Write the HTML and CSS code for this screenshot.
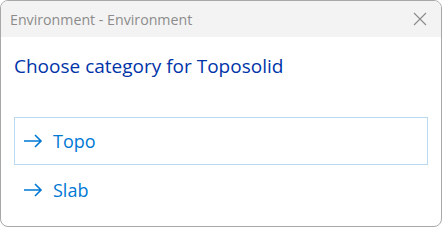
FILE: index.html
```html
<!DOCTYPE html>
<html>
<head>
<meta charset="utf-8">
<link rel="stylesheet" href="styles.css">
</head>
<body>
<div class="window">
  <div class="titlebar">
    <span class="title">Environment - Environment</span>
    <svg class="close" width="14" height="14" viewBox="0 0 14 14"><path d="M1 1 L13 13 M13 1 L1 13" stroke="#8a8a8a" stroke-width="1.1" fill="none"/></svg>
  </div>
  <div class="content">
    <div class="heading">Choose category for Toposolid</div>
    <div class="options">
      <div class="option selected">
        <svg class="arrow" width="20" height="14" viewBox="0 0 20 14"><path d="M1 7 H18 M12 1 L18 7 L12 13" stroke="#0078d4" stroke-width="1.6" fill="none"/></svg>
        <span>Topo</span>
      </div>
      <div class="option">
        <svg class="arrow" width="20" height="14" viewBox="0 0 20 14"><path d="M1 7 H18 M12 1 L18 7 L12 13" stroke="#0078d4" stroke-width="1.6" fill="none"/></svg>
        <span>Slab</span>
      </div>
    </div>
  </div>
</div>
</body>
</html>
```
FILE: styles.css
```css
html, body {
  margin: 0;
  padding: 0;
  background: #ffffff;
}
.window {
  box-sizing: border-box;
  width: 442px;
  height: 227px;
  border: 1px solid #a8a8a8;
  border-radius: 8px;
  overflow: hidden;
  background: #ffffff;
  font-family: "Open Sans", "Noto Sans", sans-serif;
}
.titlebar {
  height: 36px;
  background: #f3f3f3;
  display: flex;
  align-items: center;
  justify-content: space-between;
  padding: 0 14px 0 9px;
}
.title {
  font-size: 14.2px;
  color: #8c8c8c;
}
.close {
  display: block;
}
.content {
  padding: 0 13px 0 13px;
}
.heading {
  margin-top: 17px;
  font-size: 19px;
  line-height: 24px;
  color: #0033a8;
}
.options {
  margin-top: 39px;
  display: flex;
  flex-direction: column;
  gap: 1px;
}
.option {
  box-sizing: border-box;
  height: 48px;
  display: flex;
  align-items: center;
  gap: 10px;
  padding-left: 8px;
  border: 1px solid transparent;
  font-size: 18px;
  color: #0078d4;
}
.option.selected {
  border-color: #b8dbf3;
}
.arrow {
  display: block;
}
```
